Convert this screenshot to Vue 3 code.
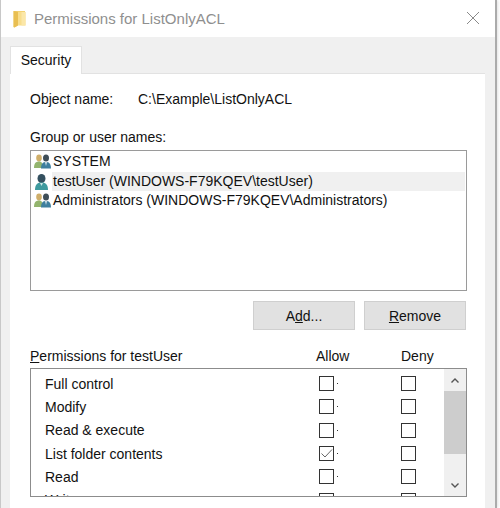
<template>
  <div class="screen">
    <div class="dialog">
      <div class="titlebar">
        <svg class="folder" width="13" height="18" viewBox="0 0 13 18">
          <path d="M3 1 L12 1 L12 15 L4 15 Z" fill="#f3d272" />
          <path d="M0.5 1 L5 1 L5 2 L12.5 2 L12.5 15.5 L5 15.5 L1.5 17.5 L0.5 17 Z" fill="#f8dd8c" />
          <path d="M8.5 2 L12.5 2 L12.5 15.5 L8.5 15.5 Z" fill="#fbe7a8" />
          <path d="M0.5 1 L5 1.5 L5 15.5 L1.5 17.5 L0.5 17 Z" fill="#e9bf52" />
        </svg>
        <span class="title">Permissions for ListOnlyACL</span>
        <svg class="close" width="12" height="12" viewBox="0 0 12 12">
          <path d="M0 0 L12 12 M12 0 L0 12" stroke="#8a8a8a" stroke-width="1" fill="none" />
        </svg>
      </div>

      <div class="body">
        <div class="tabs">
          <div class="tab">Security</div>
        </div>
        <div class="panel">
          <div class="object-row">
            <span class="object-label">Object name:</span>
            <span>C:\Example\ListOnlyACL</span>
          </div>

          <div class="group-label">Group or user names:</div>
          <div class="user-list">
            <div
              v-for="user in users"
              :key="user.name"
              class="user-row"
              :class="{ selected: user.selected }"
            >
              <svg class="user-icon" width="19" height="17" viewBox="0 0 19 17">
                <template v-if="user.group">
                  <ellipse cx="6" cy="5" rx="2.8" ry="3.4" fill="#cfae6a" />
                  <path d="M1 15 C1 9 4 8.5 6 8.5 C8 8.5 10 9.5 10 15 Z" fill="#93b46e" />
                  <ellipse cx="13" cy="5" rx="3" ry="3.5" fill="#3f4e58" />
                  <path d="M8 15.5 C8 10 10.5 9 13 9 C15.5 9 18 10 18 15.5 Z" fill="#3f7f9e" />
                  <path d="M12 9 L14 9 L13 13 Z" fill="#dfeaf0" />
                </template>
                <template v-else>
                  <ellipse cx="8.5" cy="5.5" rx="4" ry="4.5" fill="#34505f" />
                  <path d="M2 17 C2 11 5 9.5 8.5 9.5 C12 9.5 15 11 15 17 Z" fill="#3e9a9e" />
                  <path d="M7 10 L10 10 L8.5 13 Z" fill="#cfe6e6" />
                </template>
              </svg>
              <span class="user-name">{{ user.name }}</span>
            </div>
          </div>

          <div class="buttons">
            <button class="btn">A<u>d</u>d...</button>
            <button class="btn"><u>R</u>emove</button>
          </div>

          <div class="perm-head">
            <span class="perm-title"><u>P</u>ermissions for testUser</span>
            <span class="head-allow">Allow</span>
            <span>Deny</span>
          </div>

          <div class="perm-box">
            <div class="perm-list">
              <div v-for="perm in permissions" :key="perm.name" class="perm-row">
                <span class="perm-name">{{ perm.name }}</span>
                <span class="col">
                  <span class="check">
                    <svg v-if="perm.allow" width="13" height="11" viewBox="0 0 13 11">
                      <path d="M1.5 5.5 L5 9 L12 1.5" stroke="#666" stroke-width="1" fill="none" />
                    </svg>
                  </span>
                  <span class="dot"></span>
                </span>
                <span class="col"><span class="check"></span></span>
              </div>
            </div>
            <div class="scrollbar">
              <svg class="arrow" width="8" height="5" viewBox="0 0 8 5">
                <path d="M0.5 4.5 L4 1 L7.5 4.5" stroke="#555" stroke-width="1.4" fill="none" />
              </svg>
              <div class="thumb"></div>
              <svg class="arrow down" width="8" height="5" viewBox="0 0 8 5">
                <path d="M0.5 0.5 L4 4 L7.5 0.5" stroke="#555" stroke-width="1.4" fill="none" />
              </svg>
            </div>
          </div>
        </div>
      </div>
    </div>
  </div>
</template>

<script setup>
const users = [
  { name: 'SYSTEM', group: true },
  { name: 'testUser (WINDOWS-F79KQEV\\testUser)', selected: true },
  { name: 'Administrators (WINDOWS-F79KQEV\\Administrators)', group: true },
];

const permissions = [
  { name: 'Full control' },
  { name: 'Modify' },
  { name: 'Read & execute' },
  { name: 'List folder contents', allow: true },
  { name: 'Read' },
  { name: 'Write' },
];
</script>

<style>
html,
body {
  margin: 0;
  overflow: hidden;
}
</style>

<style scoped>
.screen {
  width: 500px;
  height: 508px;
  overflow: hidden;
  background: #fff;
  font-family: 'Liberation Sans', Arial, sans-serif;
  font-size: 14px;
  color: #111;
}
.dialog {
  width: 497px;
  height: 508px;
  border-left: 1px solid #c8c8c8;
  border-right: 2px solid #ababab;
  box-sizing: border-box;
  box-shadow: 1px 0 3px rgba(0, 0, 0, 0.12);
}
.titlebar {
  height: 37px;
  display: flex;
  align-items: center;
  padding-left: 12px;
  background: #fff;
}
.folder {
  margin-right: 8px;
}
.title {
  flex: 1;
  font-size: 15px;
  color: #8f8f8f;
}
.close {
  margin-right: 16px;
  margin-bottom: 1px;
}
.body {
  height: 471px;
  background: #f0f0f0;
  padding: 9px 10px 0 9px;
  box-sizing: border-box;
  display: flex;
  flex-direction: column;
}
.tabs {
  display: flex;
  height: 27px;
}
.tab {
  width: 72px;
  height: 28px;
  box-sizing: border-box;
  text-align: center;
  line-height: 26px;
  background: #fff;
  border: 1px solid #e2e2e2;
  border-bottom: none;
  position: relative;
  z-index: 1;
}
.panel {
  flex: 1;
  background: #fff;
  border-top: 1px solid #e2e2e2;
  padding: 15px 18px 0 20px;
}
.object-row {
  height: 20px;
  display: flex;
  align-items: center;
}
.object-label {
  width: 108px;
}
.group-label {
  margin-top: 20px;
  height: 16px;
  line-height: 16px;
}
.user-list {
  margin-top: 5px;
  height: 141px;
  border: 1px solid #9a9a9a;
  box-sizing: border-box;
  padding: 1px;
}
.user-row {
  height: 19.5px;
  display: flex;
  align-items: center;
  padding-left: 1px;
}
.user-icon {
  flex: none;
}
.user-name {
  padding-left: 1px;
  line-height: 19.5px;
  flex: 1;
}
.user-row.selected .user-name {
  background: #f0f0f0;
}
.buttons {
  display: flex;
  justify-content: flex-end;
  gap: 9px;
  margin-top: 10px;
  margin-right: 1px;
}
.btn {
  width: 102px;
  height: 29px;
  border: 1px solid #cfcfcf;
  background: #e1e1e1;
  font: inherit;
  color: #111;
  padding: 0;
}
.perm-head {
  display: flex;
  align-items: center;
  margin-top: 18px;
  height: 16px;
}
.perm-title {
  width: 286px;
}
.head-allow {
  width: 85px;
}
.perm-box {
  margin-top: 4px;
  height: 129px;
  border: 1px solid #8c8c8c;
  box-sizing: border-box;
  display: flex;
  overflow: hidden;
}
.perm-list {
  flex: 1;
  min-width: 0;
  padding-top: 3px;
}
.perm-row {
  height: 23.33px;
  display: flex;
  align-items: center;
}
.perm-name {
  flex: none;
  width: 288px;
  padding-left: 14px;
  box-sizing: border-box;
}
.col {
  flex: none;
  width: 82px;
  display: flex;
  align-items: center;
}
.col + .col {
  width: 26px;
}
.check {
  width: 15px;
  height: 15px;
  flex: none;
  border: 1px solid #333;
  box-sizing: border-box;
  display: flex;
  align-items: center;
  justify-content: center;
}
.dot {
  width: 1px;
  height: 1px;
  margin-left: 3px;
  background: #333;
}
.scrollbar {
  width: 22px;
  flex: none;
  background: #f0f0f0;
  display: flex;
  flex-direction: column;
  align-items: center;
}
.arrow {
  margin: 9px 0 8px;
  flex: none;
}
.thumb {
  width: 100%;
  height: 63px;
  flex: none;
  background: #cdcdcd;
}
.arrow.down {
  margin-top: auto;
}
</style>
